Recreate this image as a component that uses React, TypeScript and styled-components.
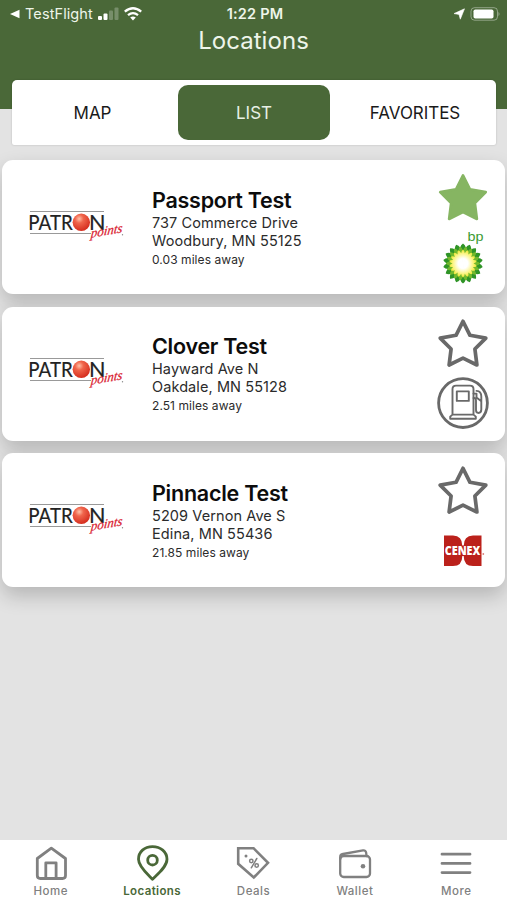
import React from 'react';
import styled, { createGlobalStyle, css } from 'styled-components';

const GREEN = '#4a6838';

const GlobalStyle = createGlobalStyle`
  * { box-sizing: border-box; }
  body { margin: 0; background: #e3e3e3; font-family: Inter, "Liberation Sans", sans-serif; }
`;

const Screen = styled.div`
  width: 507px;
  height: 900px;
  display: flex;
  flex-direction: column;
  background: #e3e3e3;
  overflow: hidden;
`;

const Header = styled.header`
  height: 109px;
  flex: none;
  background: ${GREEN};
  color: #eef5ea;
`;

const StatusBar = styled.div`
  height: 27px;
  display: grid;
  grid-template-columns: 1fr auto 1fr;
  align-items: center;
  padding: 0 7px 0 10px;
  font-size: 14.5px;
`;

const StatusGroup = styled.div<{ $end?: boolean }>`
  display: flex;
  align-items: center;
  justify-content: ${(p) => (p.$end ? 'flex-end' : 'flex-start')};
  gap: 5px;
  svg { display: block; flex: none; }
`;

const BackLabel = styled.span`
  letter-spacing: 0.1px;
`;

const Clock = styled.span`
  font-size: 14.5px;
  font-weight: 600;
  letter-spacing: 0.2px;
`;

const Title = styled.h1`
  margin: 0;
  text-align: center;
  font-size: 24px;
  line-height: 28px;
  font-weight: 400;
  letter-spacing: 0.05px;
`;

const Segments = styled.nav`
  position: relative;
  flex: none;
  height: 65px;
  margin: -29px 11px 0 12px;
  padding: 5px 0 6px;
  display: grid;
  grid-template-columns: 161px 152px 160px;
  column-gap: 5px;
  background: #fff;
  border-radius: 5px 5px 2px 2px;
  box-shadow: 0 0 2px rgba(0, 0, 0, 0.22);
`;

const Segment = styled.button<{ $active?: boolean }>`
  border: 0;
  padding: 1px 0 0;
  border-radius: 10px;
  background: ${(p) => (p.$active ? GREEN : 'transparent')};
  color: ${(p) => (p.$active ? '#e8f0e4' : '#1a1a1a')};
  font: 400 17px/54px Inter, sans-serif;
  letter-spacing: -0.05px;
`;

const List = styled.main`
  flex: 1;
  display: flex;
  flex-direction: column;
  gap: 12.5px;
  padding: 15px 2px 0;
`;

const Card = styled.article`
  height: 134px;
  flex: none;
  display: grid;
  grid-template-columns: 150px 1fr 84px;
  background: #fff;
  border-radius: 11px;
  box-shadow: 0 9px 20px rgba(0, 0, 0, 0.2);
`;

const LogoCell = styled.div`
  padding: 46px 0 0 24px;
  svg { display: block; }
`;

const Details = styled.div`
  padding-top: 25.5px;
  color: #2b2b2b;
`;

const Name = styled.h2`
  margin: 0;
  font-size: 21.5px;
  line-height: 28px;
  font-weight: 600;
  letter-spacing: -0.25px;
  color: #0c0c0c;
`;

const Address = styled.p`
  margin: 0;
  font-size: 14.5px;
  line-height: 18px;
  letter-spacing: 0.09px;
`;

const Distance = styled.p`
  margin: 0;
  padding-top: 1px;
  font-size: 12px;
  line-height: 18px;
  letter-spacing: 0.06px;
`;

const Actions = styled.div`
  display: flex;
  flex-direction: column;
  align-items: center;
  padding-top: 10.5px;
  svg { display: block; overflow: visible; }
`;

const TabBar = styled.nav`
  height: 60px;
  flex: none;
  display: grid;
  grid-template-columns: repeat(5, 1fr);
  background: #fff;
`;

const Tab = styled.a<{ $active?: boolean }>`
  display: flex;
  flex-direction: column;
  align-items: center;
  padding-top: 4px;
  font-size: 11.5px;
  line-height: 15px;
  font-weight: 500;
  letter-spacing: 0.5px;
  color: #808080;
  svg { display: block; margin-bottom: 2px; }
  ${(p) => p.$active && css`color: ${GREEN}; font-weight: 600; letter-spacing: 0.38px;`}
`;

const PatronLogo = () => (
  <svg width="104" height="44" viewBox="26 206 104 44">
    <defs>
      <radialGradient id="ball" cx="0.38" cy="0.3" r="0.7">
        <stop offset="0" stopColor="#ffc0a8" />
        <stop offset="0.35" stopColor="#f0654c" />
        <stop offset="1" stopColor="#d62f20" />
      </radialGradient>
    </defs>
    <path d="M30 211.5H104M30 233.5H91" stroke="#999" strokeWidth="1" />
    <text x="28.3" y="230.2" fontFamily="Lato, sans-serif" fontSize="22" fill="#222" stroke="#222" strokeWidth="0.2" textLength="44.5" lengthAdjust="spacingAndGlyphs">PATR</text>
    <text x="89" y="230.2" fontFamily="Lato, sans-serif" fontSize="22" fill="#222" stroke="#222" strokeWidth="0.2" textLength="16.5" lengthAdjust="spacingAndGlyphs">N</text>
    <circle cx="81.3" cy="222.3" r="8.7" fill="url(#ball)" />
    <text transform="translate(90.5 237.8) rotate(-10) skewX(-16)" fontFamily="Liberation Serif, serif" fontStyle="italic" fontSize="13" fill="#d9202f" stroke="#d9202f" strokeWidth="0.25" textLength="32" lengthAdjust="spacingAndGlyphs">points</text>
    <circle cx="122.5" cy="234.7" r="0.7" fill="#888" />
  </svg>
);

const Star = ({ filled }: { filled?: boolean }) => (
  <svg width="52" height="54" viewBox="0 0 52 54">
    <path
      d="M26 4.3L33 18.3L48.8 21.1L37.9 32L39.9 48L26 41.2L12.1 48L14.1 32L3.2 21.1L19 18.3Z"
      fill={filled ? '#86b562' : 'none'}
      stroke={filled ? '#86b562' : '#696969'}
      strokeWidth={filled ? 2.6 : 3.7}
      strokeLinejoin="round"
    />
  </svg>
);

/** Ring of pointed petals around the origin. */
const petals = (count: number, radius: number, inner: number, offset = 0) =>
  Array.from({ length: count }, (_, i) => {
    const a = ((i + offset) * 2 * Math.PI) / count;
    const h = Math.PI / count;
    const pt = (r: number, t: number) => `${(r * Math.sin(t)).toFixed(2)} ${(-r * Math.cos(t)).toFixed(2)}`;
    return `M0 0L${pt(inner, a - h)}Q${pt(radius * 0.93, a - h * 0.7)} ${pt(radius, a)}Q${pt(radius * 0.93, a + h * 0.7)} ${pt(inner, a + h)}Z`;
  }).join('');

const BpLogo = () => (
  <svg width="52" height="58" viewBox="0 0 52 58">
    <defs>
      <radialGradient id="sun">
        <stop offset="0.35" stopColor="#fff" />
        <stop offset="0.75" stopColor="#fbf47c" />
        <stop offset="1" stopColor="#e8e52e" />
      </radialGradient>
    </defs>
    <text x="30.5" y="15.6" fontFamily="Liberation Sans, sans-serif" fontSize="13.5" fill="#3c9b32" textLength="16" lengthAdjust="spacingAndGlyphs">bp</text>
    <g transform="translate(26 38.5)">
      <path d={petals(18, 20, 16)} fill="#2f9427" />
      <path d={petals(18, 17.2, 12.5, 0.5)} fill="#72b82c" />
      <path d={petals(18, 14, 10.5)} fill="url(#sun)" />
    </g>
  </svg>
);

const FuelIcon = () => (
  <svg width="52" height="58" viewBox="0 -2.6 52 58" fill="none" stroke="#696969" strokeLinecap="round" strokeLinejoin="round">
    <circle cx="26" cy="29.5" r="24.4" strokeWidth="2.8" />
    <path d="M15.5 41V15.5Q15.5 12 19 12H33Q36.5 12 36.5 15.5V41M15.5 41L13.2 43V45.2H38.8V43L36.5 41Z" strokeWidth="1.9" />
    <rect x="19.8" y="17.8" width="12" height="9.5" strokeWidth="1.9" />
    <path d="M36.5 24.5Q39 24 39 27V36.5Q39 39.4 41.5 39.4Q44.3 39.4 44.3 36V23Q44.3 17.5 39.5 17.3M36.5 20H39.5V24L44 27.5" strokeWidth="1.9" />
  </svg>
);

const CenexLogo = () => (
  <svg width="52" height="58" viewBox="0 0 52 58">
    <path d="M7 17.5H16Q25.3 17.5 25.3 28V38Q25.3 48 16 48H7ZM44.5 17.5H36Q26.7 17.5 26.7 28V38Q26.7 48 36 48H44.5Z" fill="#bb211b" />
    <rect x="24" y="27.5" width="4" height="10.5" fill="#bb211b" />
    <text x="7.8" y="36.5" fontFamily="Open Sans, sans-serif" fontWeight="800" fontSize="12.3" fill="#fff" textLength="35.5" lengthAdjust="spacingAndGlyphs">CENEX</text>
    <circle cx="46.3" cy="36" r="0.9" fill="#d8817d" />
  </svg>
);

const TabIcon = ({ children }: { children: React.ReactNode }) => (
  <svg width="40" height="38" viewBox="0 0 40 38" fill="none" stroke="currentColor" strokeWidth="2.8" strokeLinejoin="round" strokeLinecap="round">
    {children}
  </svg>
);

const tabs = [
  { label: 'Home', icon: <path d="M6.3 14.5L20.3 4.2L34.5 14.5V31.5Q34.5 34.5 31.5 34.5H9.3Q6.3 34.5 6.3 31.5ZM14.8 34.5V18.8H25.1V34.5" /> },
  { label: 'Locations', active: true, icon: <><path d="M20.5 35.2C16 30.5 6.5 23 6.5 15.3C6.5 7.8 12.5 2.6 20.5 2.6S35 7.8 35 15.3C35 23 25.3 30.5 20.5 35.2Z" /><circle cx="20.5" cy="16.2" r="4.8" /></> },
  { label: 'Deals', icon: <><path d="M5.2 4.2H20.5L35 18.8L20.8 33.5L5.2 19.8Z" strokeWidth="2.6" strokeLinejoin="miter" /><circle cx="13" cy="12" r="1.5" fill="currentColor" stroke="none" /><g strokeWidth="1.5"><circle cx="18.3" cy="17" r="1.7" /><circle cx="23.7" cy="21.5" r="1.7" /><path d="M23.8 14.5L18.3 23.8" /></g></> },
  { label: 'Wallet', icon: <><rect x="5.2" y="12" width="29.8" height="21" rx="3.5" strokeWidth="2.3" /><path d="M5.2 15V13Q5.2 10.5 8 10L28 6.4Q30.8 6 31.2 9L31.5 12" strokeWidth="2.3" /><circle cx="28" cy="22.2" r="2.3" fill="currentColor" stroke="none" /></> },
  { label: 'More', icon: <path d="M6 10.2H34M6 19.4H34M6 28.6H34" /> },
];

const locations = [
  { name: 'Passport Test', lines: ['737 Commerce Drive', 'Woodbury, MN 55125'], miles: '0.03', favorite: true, brand: <BpLogo /> },
  { name: 'Clover Test', lines: ['Hayward Ave N', 'Oakdale, MN 55128'], miles: '2.51', brand: <FuelIcon /> },
  { name: 'Pinnacle Test', lines: ['5209 Vernon Ave S', 'Edina, MN 55436'], miles: '21.85', brand: <CenexLogo /> },
];

export default function App() {
  return (
    <Screen>
      <GlobalStyle />
      <Header>
        <StatusBar>
          <StatusGroup>
            <svg width="10" height="10" viewBox="0 0 10 10"><path d="M0 5L9.5 0.7V9.3Z" fill="#fff" /></svg>
            <BackLabel>TestFlight</BackLabel>
            <svg width="21" height="14" viewBox="0 0 21 14" fill="#fff">
              <rect x="0" y="9" width="4" height="4" rx="1" />
              <rect x="5.5" y="6.5" width="4" height="6.5" rx="1" />
              <rect x="11" y="3.5" width="4" height="9.5" rx="1" opacity="0.25" />
              <rect x="16.5" y="0.5" width="4" height="12.5" rx="1" opacity="0.25" />
            </svg>
            <svg width="18" height="14" viewBox="0 0 18 14" fill="none" stroke="#fff" strokeWidth="2.3">
              <path d="M0.8 4.7Q9 -2.2 17.2 4.7M4 8.2Q9 4 14 8.2" />
              <path d="M9 13.5L6.2 10.6Q9 8.4 11.8 10.6Z" fill="#fff" stroke="none" />
            </svg>
          </StatusGroup>
          <Clock>1:22 PM</Clock>
          <StatusGroup $end>
            <svg width="12" height="12" viewBox="0 0 12 12"><path d="M11.5 0.8L7.3 11.2L6 6.4L1 5.6Z" fill="#fff" stroke="#fff" strokeWidth="0.6" strokeLinejoin="round" /></svg>
            <svg width="30" height="14" viewBox="2 0 30 14">
              <rect x="3" y="0.7" width="26.5" height="12.5" rx="3.5" fill="none" stroke="#fff" strokeOpacity="0.4" />
              <rect x="5.5" y="2.5" width="20" height="9" rx="1.8" fill="#fff" />
              <path d="M30.5 4.7V9.2Q32.5 7 30.5 4.7" fill="#fff" opacity="0.45" />
            </svg>
          </StatusGroup>
        </StatusBar>
        <Title>Locations</Title>
      </Header>
      <Segments>
        <Segment>MAP</Segment>
        <Segment $active>LIST</Segment>
        <Segment>FAVORITES</Segment>
      </Segments>
      <List>
        {locations.map((l) => (
          <Card key={l.name}>
            <LogoCell><PatronLogo /></LogoCell>
            <Details>
              <Name>{l.name}</Name>
              {l.lines.map((line) => <Address key={line}>{line}</Address>)}
              <Distance>{l.miles} miles away</Distance>
            </Details>
            <Actions>
              <Star filled={l.favorite} />
              {l.brand}
            </Actions>
          </Card>
        ))}
      </List>
      <TabBar>
        {tabs.map((t) => (
          <Tab key={t.label} $active={t.active}>
            <TabIcon>{t.icon}</TabIcon>
            {t.label}
          </Tab>
        ))}
      </TabBar>
    </Screen>
  );
}
